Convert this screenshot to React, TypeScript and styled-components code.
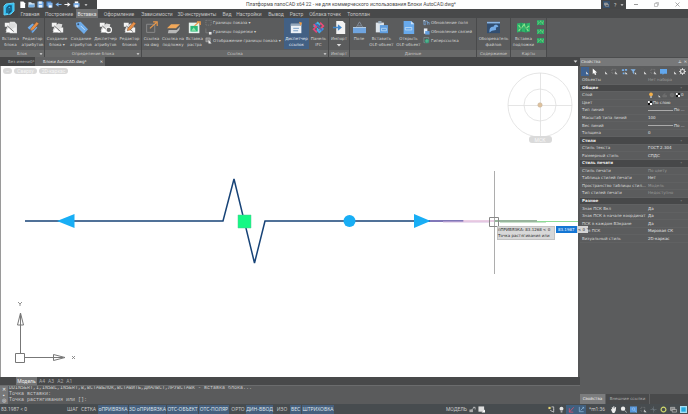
import React from "react";
import styled, { createGlobalStyle, css } from "styled-components";

const Global = createGlobalStyle`
  * { box-sizing: border-box; }
  html, body, #root { height: 100%; margin: 0; }
  body { background: #555657; overflow: hidden; }
  body, button, input { font-family: Roboto, "Noto Sans", sans-serif; font-size: 5px; line-height: 6px; }
  button, input { border: 0; padding: 0; margin: 0; color: inherit; background: none; border-radius: 0; }
  svg { display: block; flex: none; }
`;

const compact = css`
  &, button, input { font-family: "DejaVu Sans", sans-serif; font-size: 4px; }
`;

/* ---------- icons ---------- */

type IconName =
  | "new" | "open" | "save" | "saveAll" | "undo" | "redo" | "print" | "caret"
  | "insertBlock" | "editAttr" | "createBlock" | "tag" | "manager" | "editBlock"
  | "linkDwg" | "linkUnder" | "raster" | "frame" | "clip" | "eyeFrame" | "dispatcher" | "ifc"
  | "import" | "field" | "pasteOle" | "openOle" | "updField" | "updLink" | "hyper"
  | "explorer" | "map" | "cursor" | "pick" | "rect" | "dots" | "filter" | "chat" | "gear"
  | "bulb" | "lamp" | "hand" | "magnifier" | "zoomWin" | "orbit" | "ring" | "windows" | "screen"
  | "axes" | "pen" | "lock" | "sheet" | "wave" | "layers" | "globe" | "swatch";

const blocks = (
  <>
    <path d="M1 2h6v5H1zM9 8h6v6H9z" fill="#f2f2f2" />
    <path d="M4 7l5-4 5 1-1 4-7 5-4-1z" fill="#dcdcdc" />
    <path d="M2 14l4-6 5 6z" fill="#fff" />
    <path d="M4 6l8 7" stroke="#666" strokeWidth="1" />
  </>
);
const pencil = <path d="M6 9L13 1l3 2-7 8-4 1z" fill="#e88f46" stroke="#543b2d" strokeWidth=".5" />;
const mapBody = (
  <>
    <path d="M0 3l5-1 6 1 5-1v11l-5 1-6-1-5 1z" fill="#2fb56b" />
    <path d="M2 5l3 4 4-5 2 5 4-3M5 9l-3 3M11 9l3 3" stroke="#8fe38c" strokeWidth="1.4" fill="none" />
    <path d="M5 2v11M11 3v11" stroke="#16734b" strokeWidth=".8" />
  </>
);

const art: Record<IconName, React.ReactNode> = {
  new: <path d="M3 1h7l4 4v11H3z" fill="#fff" />,
  open: <><path d="M1 3h6l2 2h6v9H1z" fill="#d8e9f6" /><path d="M3 8h13l-3 6H1z" fill="#76aee0" /></>,
  save: <><path d="M1 1h12l2 2v12H1z" fill="#74aae5" /><path d="M4 1h7v5H4zM4 9h8v6H4z" fill="#e3f0fb" /></>,
  saveAll: <><path d="M1 1h11v11H1z" fill="#4b87ca" /><path d="M4 4h11v11H4z" fill="#85b6ec" /><path d="M7 10h6v5H7z" fill="#fff" /></>,
  undo: <path d="M15 7H8V3L1 8l7 5V9h7z" fill="#80b5ed" />,
  redo: <path d="M1 7h7V3l7 5-7 5V9H1z" fill="#f3f3f3" />,
  print: <><path d="M4 1h8v5H4z" fill="#fff" /><path d="M1 5h14v8H1z" fill="#79aee8" /><path d="M4 9h8v6H4z" fill="#e6eff8" /></>,
  caret: <path d="M2 5h12l-6 7z" fill="#ddd" />,
  insertBlock: <><path d="M7 1h6l3 3v11H7z" fill="#e2e2e2" />{blocks}</>,
  editAttr: <><path d="M2 8l6-5 6 5-6 7z" fill="#72ace9" /><path d="M4 10l4 4" stroke="#335e92" />{pencil}</>,
  createBlock: blocks,
  tag: <><path d="M1 2l6-1 9 9-5 6-9-9z" fill="#6eabe8" /><circle cx="4" cy="4" r="1.2" fill="#35506d" /><path d="M7 6l5 5" stroke="#d3e6fa" /></>,
  manager: <>{blocks}<circle cx="12" cy="11" r="3.4" fill="#666" stroke="#f2f2f2" strokeWidth="1.5" /></>,
  editBlock: <>{blocks}{pencil}</>,
  linkDwg: <><path d="M2 4h10v10H2z" fill="none" stroke="#929292" /><path d="M6 9l8-7M10 1h5v5" fill="none" stroke="#ed9a49" strokeWidth="1.4" /></>,
  linkUnder: <><path d="M5 4h11l-5 5H0z" fill="#f1a85a" /><path d="M2 11h10l4-4-1 4-4 4H1z" fill="#b8b8b8" /></>,
  raster: <><path d="M1 2h13v13H1z" fill="#e7f3ef" /><path d="M3 6h9v7H3z" fill="#2db878" /><path d="M4 12l3-4 3 4" fill="#8be7a8" /><path d="M8 6l6-5M11 1h4v4" stroke="#ed9a49" strokeWidth="1.6" fill="none" /></>,
  frame: <path d="M2 3h12v11H2z" fill="none" stroke="#a9a9a9" strokeDasharray="2 2" />,
  clip: <><path d="M2 1v10h9" fill="none" stroke="#9a9a9a" /><path d="M9 9h6v6H9z" fill="#e8e8e8" /></>,
  eyeFrame: <><path d="M2 2h10v9H2z" fill="#888" stroke="#ccc" /><path d="M8 7l7 8H8z" fill="#f4f4f4" /></>,
  dispatcher: <><path d="M1 4h13v11H1z" fill="#edf2f7" /><path d="M1 3h13v3H1z" fill="#95a8bc" /><path d="M4 9h7M4 12h6" stroke="#608ebb" /><path d="M11 1l4 1-2 4z" fill="#ef9d48" /></>,
  ifc: (
    <g fill="none" strokeWidth="2">
      <path d="M2 7l5-5 3 3M6 9l3 3" stroke="#43b6e5" />
      <path d="M10 2l4 4-5 5M2 4l4 4" stroke="#ed4a79" />
      <path d="M14 9l-5 5-3-3" stroke="#43a3e5" />
      <path d="M6 14l-4-4 5-5" stroke="#e0457c" />
      <path d="M4 3l9 9" stroke="#3f6fc0" />
    </g>
  ),
  import: <><path d="M4 0h8l3 3v13H4z" fill="#f3f3f3" /><path d="M0 7h6V4l5 4-5 4V9H0z" fill="#4187cc" /></>,
  field: <><path d="M0 8h16v7H0z" fill="#6fa4df" /><path d="M4 8l4-7 4 7M6 6h4" stroke="#8c99a8" fill="none" /><path d="M0 8h16" stroke="#c4dcf3" /></>,
  pasteOle: <><path d="M1 2h10v12H1z" fill="#dce4eb" /><path d="M4 0h4v3H4z" fill="#96a9ba" /><path d="M6 5h10v10H6z" fill="#609edf" /><path d="M8 9h6v3H8z" fill="none" stroke="#b8d7f5" /></>,
  openOle: <><path d="M2 0h9l4 3v13H2z" fill="#68a9eb" /><path d="M4 8h8v3H4z" fill="none" stroke="#c1dcf5" /><path d="M11 0v4h4z" fill="#cbe1f6" /></>,
  updField: <><path d="M2 3v10h4M5 13V5h5v8M10 8h4v5" stroke="#7cacdf" strokeWidth="1.6" fill="none" /><path d="M1 2l4 1-3 3z" fill="#e6e6e6" /></>,
  updLink: <><path d="M2 1h8v12H2z" fill="#e6eef7" /><path d="M5 7h10v8H5z" fill="#639fdf" /></>,
  hyper: <><path d="M2 1h11v12H2z" fill="none" stroke="#8ebbb9" /><circle cx="9" cy="9" r="5" fill="#25926d" /><path d="M4 9h10M9 4v10" stroke="#9ce0c1" /></>,
  explorer: <><path d="M0 1h16v14H0z" fill="#324e70" /><path d="M0 1h16v2H0z" fill="#8bb5e3" /><path d="M3 14c0-5 1-7 5-7 1-3 5-3 6 0l-3 1v3l-5 1z" fill="#75ace7" /></>,
  map: mapBody,
  cursor: <path d="M4 1v13l3-3 2 5 3-1-2-5h4z" fill="#fff" />,
  pick: <><path d="M2 2h8v8" fill="none" stroke="#666" /><path d="M9 8l6 6h-5z" fill="#e7e7e7" /></>,
  rect: <><path d="M2 3h9v9H2z" fill="none" stroke="#aaa" strokeDasharray="2 2" /><path d="M9 8l6 6h-5z" fill="#ddd" /></>,
  dots: <><path d="M2 3h5v4H2zM9 2h5v4H9zM4 10h4v4H4z" fill="#77aee8" /><path d="M10 9l5 5h-5z" fill="#eee" /></>,
  filter: <><path d="M1 3h12L9 8v6L6 11V8z" fill="#83b5e9" /><path d="M11 9l4 5h-4z" fill="#eee" /></>,
  chat: <path d="M0 2h16v11H9l-3 3v-3H0z" fill="#62a7ed" />,
  gear: <><circle cx="8" cy="8" r="4.500" fill="none" stroke="#ddd" strokeWidth="2.500" /><path d="M8 0v3M8 13v3M0 8h3M13 8h3M2 2l2 2M12 12l2 2M14 2l-2 2M4 12l-2 2" stroke="#ddd" strokeWidth="2" /></>,
  bulb: <><circle cx="8" cy="6" r="5" fill="#f3b04b" /><path d="M6 11h4v4H6z" fill="#ddd" /></>,
  lamp: <><circle cx="8" cy="6" r="4.500" fill="#e4e4e4" /><path d="M6 11h4v4H6z" fill="#a9a9a9" /></>,
  hand: <path d="M2 8l2-1 1 2-1-6 2-1 1 5 1-7 2 1v6l2-5 2 1-1 8-3 5H6z" fill="#eee" />,
  magnifier: <><circle cx="7" cy="6" r="5" fill="#ececec" /><path d="M11 10l4 5" stroke="#bbb" strokeWidth="2" /></>,
  zoomWin: <><path d="M0 1h16v14H0z" fill="#5a98db" /><circle cx="8" cy="7" r="3" fill="none" stroke="#b4d6f8" /><path d="M10 9l5 6" stroke="#b4d6f8" /></>,
  orbit: <><path d="M8 1v14M1 8h14" stroke="#7b8790" /><path d="M4 4l8 8" stroke="#77818b" /></>,
  ring: <circle cx="8" cy="8" r="5.500" fill="none" stroke="#d5dc6e" strokeWidth="2.600" />,
  windows: <><path d="M1 3h10v7H1z" fill="#888" stroke="#ddd" /><path d="M5 8h10v6H5z" fill="#555" stroke="#eee" /></>,
  screen: <><path d="M0 0h16v16H0z" fill="#a6dff5" /><path d="M3 3h10v10H3z" fill="#27a9dc" /></>,
  axes: <path d="M3 2v11h10M6 10l7-7M10 3h3v3" fill="none" stroke="#9cc8ee" strokeWidth="1.400" />,
  pen: <path d="M3 14L13 3M3 5v9h9" fill="none" stroke="#e0506e" strokeWidth="1.800" />,
  lock: <><path d="M1 8h8v6H1z" fill="#aaa" /><path d="M6 9L13 2M9 3h5v5" fill="none" stroke="#ddd" strokeWidth="1.400" /></>,
  sheet: <><path d="M1 1h13v12H1z" fill="#ddd" /><path d="M8 15h8V8z" fill="#fff" /></>,
  wave: <><path d="M1 2h5v5H1z" fill="#e7d673" /><path d="M8 2h5v6M5 10l8 4V7" fill="none" stroke="#eee" strokeWidth="1.500" /></>,
  layers: <path d="M2 9h10v4H2zM5 8V5h5" fill="#686868" stroke="#838383" />,
  globe: <><circle cx="8" cy="8" r="5" fill="#646464" stroke="#8a8a8a" /><path d="M3 8h10M8 3v10" stroke="#888" /></>,
  swatch: <><path d="M0 0h16v16H0z" fill="#111" /><path d="M0 0h7v8h9v8H8V8H0z" fill="#fff" /></>,
};

const Icon = ({ name, size = 7 }: { name: IconName; size?: number }) => (
  <svg width={size} height={size} viewBox="0 0 16 16" aria-hidden="true">{art[name]}</svg>
);

/* ---------- header ---------- */

const Shell = styled.div`display: flex; flex-direction: column; height: 100vh; color: #c4c4c4;`;
const Header = styled.header`display: flex; height: 18px; background: #48494a; flex: none;`;
const Logo = styled.div`width: 18px; display: grid; place-items: center; background: #464748;`;
const HeaderBody = styled.div`flex: 1; min-width: 0;`;
const TitleBar = styled.div`display: flex; height: 9px; background: #fefefe;`;
const Quick = styled.div`
  display: flex; align-items: center; gap: 2px; width: 79px; padding-left: 1px; background: #464748;
  button { display: grid; place-items: center; width: 7px; height: 7px; }
`;
const Title = styled.h1`
  margin: 0 0 0 149px; flex: 1; color: #4a4a4a; font-size: 5px; line-height: 9px; font-weight: 400; white-space: nowrap;
`;
const Help = styled.div`display: flex; align-items: center; gap: 4px; width: 25px; padding-left: 2px; background: #464748; color: #ddd;`;
const Blue = styled.span`display: grid; place-items: center; width: 7px; height: 7px; background: #37516d;`;
const WinButtons = styled.div`
  display: flex; width: 62px; justify-content: space-around; align-items: center;
  button { display: grid; place-items: center; width: 9px; height: 9px; }
`;
const Menu = styled.nav`display: flex; height: 9px;`;
const MenuTab = styled.button<{ $w: number; $on?: boolean }>`
  width: ${p => p.$w}px; height: 9px; line-height: 10px; white-space: nowrap; text-align: center;
  ${p => p.$on && css`background: #707172; color: #e2e2e2;`}
`;

const menu: [string, number][] = [
  ["Главная", 24], ["Построение", 34], ["Вставка", 22], ["Оформление", 42], ["Зависимости", 34],
  ["3D-инструменты", 46], ["Вид", 14], ["Настройки", 30], ["Вывод", 24], ["Растр", 17], ["Облака точек", 40], ["Топоплан", 27],
];

/* ---------- ribbon ---------- */

const Ribbon = styled.div`display: flex; height: 39px; flex: none; background: #5b5c5d; color: #d4d4d4; ${compact}`;
const Group = styled.section<{ $w: number }>`
  display: flex; flex-direction: column; width: ${p => p.$w}px; flex: none; border-right: 1px solid #494a4b;
`;
const GroupBody = styled.div`display: flex; flex: 1;`;
const GroupLabel = styled.div`
  position: relative; height: 7px; line-height: 7px; text-align: center; background: #686969; color: #c8c8c8;
  svg { position: absolute; right: 1px; top: 2px; }
`;
const Tool = styled.button<{ $w: number; $on?: boolean }>`
  display: flex; flex-direction: column; align-items: center; gap: 2px; width: ${p => p.$w}px; height: 31px; padding-top: 3px;
  line-height: 6px; white-space: nowrap;
  ${p => p.$on && css`background: #426084; color: #e6eef6;`}
`;
const ToolText = styled.span`display: flex; flex-direction: column; align-items: center;`;
const List = styled.div<{ $w: number }>`
  display: flex; flex-direction: column; width: ${p => p.$w}px; padding: 0 0 0 1px;
  button { display: flex; align-items: center; gap: 1px; height: 9px; white-space: nowrap; }
`;

const Big = ({ w, icon, text, on }: { w: number; icon: IconName; text: string[]; on?: boolean }) => (
  <Tool $w={w} $on={on}>
    <Icon name={icon} size={13} />
    <ToolText>{text.map(t => t === "▾" ? <Icon key={t} name="caret" size={6} /> : <span key={t}>{t}</span>)}</ToolText>
  </Tool>
);
const Section = ({ w, label, more, children }: { w: number; label: string; more?: boolean; children: React.ReactNode }) => (
  <Group $w={w}>
    <GroupBody>{children}</GroupBody>
    <GroupLabel>{label}{more && <Icon name="caret" size={4} />}</GroupLabel>
  </Group>
);

/* ---------- workspace ---------- */

const Work = styled.main`display: flex; flex: 1; min-height: 0;`;
const Left = styled.div`display: flex; flex-direction: column; flex: 1; min-width: 0;`;
const DocTabs = styled.div`display: flex; align-items: center; height: 9px; flex: none; background: #454647; color: #b4b4b4; padding-left: 8px; ${compact}`;
const DocTab = styled.button<{ $w: number; $on?: boolean }>`
  display: flex; align-items: center; justify-content: space-between; width: ${p => p.$w}px; height: 9px; white-space: nowrap;
  ${p => p.$on && css`background: #626364; color: #ececec; padding: 0 2px 0 8px;`}
`;
const Push = styled.span`margin-left: auto; padding-right: 2px;`;
const Canvas = styled.div`position: relative; flex: 1; min-height: 0; margin-right: 2px; background: #fff; border-left: 1px solid #9a9a9a;`;
const Drawing = styled.svg`position: absolute; left: -1px; top: 0;`;
const Ucs = styled.svg`position: absolute; left: 9px; bottom: 12px;`;
const ViewPills = styled.div`
  position: absolute; left: 2px; top: 2px; display: flex; gap: 2px;
  button { height: 6px; padding: 0 3px; border-radius: 3px; background: #d9d9d9; color: #f7f7f7; }
`;
const Compass = styled.div`
  position: absolute; right: 5px; top: 6px; display: flex; flex-direction: column; align-items: center;
  button { height: 7px; width: 23px; border-radius: 3px; background: #dadada; color: #f8f8f8; margin-top: -2px; }
`;
const Dynamic = styled.div`
  position: absolute; left: 496px; top: 160px; z-index: 2; display: flex; align-items: flex-start; gap: 1px; color: #2c2c2c; white-space: nowrap; ${compact}
`;
const Tip = styled.div`background: #d8d8d8; border: 1px solid #c2c2c2; width: 58px; line-height: 6px;`;
const DynInput = styled.input`width: 21px; height: 7px; background: #1476d4; color: #f2f8ff; padding-left: 2px;`;
const Angle = styled.span`margin-left: -1px; width: 11px; height: 7px; line-height: 7px; background: #d5d5d5; padding-left: 1px;`;

const ModelTabs = styled.div`
  display: flex; align-items: center; height: 8px; flex: none; gap: 3px; background: #48494a; padding-left: 16px; color: #aaa;
  button { height: 8px; line-height: 8px; }
  button:first-child { width: 21px; background: #737475; color: #eee; margin-right: -1px; }
`;
const Command = styled.div`display: flex; height: 19px; flex: none; background: #5a5b5c; border-top: 1px solid #6b6c6d; overflow: hidden;`;
const Grip = styled.div`display: flex; flex-direction: column; align-items: center; justify-content: space-between; width: 8px; padding: 1px 0; background: #777879; color: #eee; line-height: 5px;`;
const Log = styled.pre`margin: -1px 0 0 1px; font: 5px/6px "Liberation Mono", monospace; color: #c8c8c8;`;

/* ---------- properties ---------- */

const Panel = styled.aside`display: flex; flex-direction: column; width: 108px; flex: none; background: #5b5c5d; border-top: 1px solid #4c4d4e; ${compact}`;
const PanelHead = styled.div`display: flex; align-items: center; gap: 2px; height: 8px; padding: 0 1px; background: #777879; color: #e0e0e0; span { flex: 1; }`;
const PanelTools = styled.div`
  display: flex; align-items: center; justify-content: space-between; height: 11px; padding: 0 1px;
  button { display: grid; place-items: center; width: 8px; height: 9px; }
  button:first-child { background: #3e6292; }
`;
const Props = styled.table`
  width: 100%; height: 166px; table-layout: fixed; border-collapse: collapse; font-size: 4px; line-height: 6px; color: #dadada;
  th, td { padding: 0; text-align: left; font-weight: 400; white-space: nowrap; border-bottom: 1px solid #606162; }
  th { padding-left: 2px; }
`;
const PropRow = styled.tr<{ $head?: boolean; $dim?: boolean }>`
  td { color: ${p => p.$dim ? "#9a9a9a" : "#e2e2e2"}; }
  ${p => p.$head && css`background: #474849; th { font-weight: 700; color: #ededed; } td { text-align: right; padding-right: 6px; }`}
`;
const Value = styled.span`display: flex; align-items: center; gap: 1px;`;
const Rule = styled.i`width: 25px; height: 1px; background: #aaa;`;
const PanelTabs = styled.div`
  display: flex; margin-top: auto; height: 10px; background: #494a4b; color: #b0b0b0;
  button { padding: 0 2px; border-right: 1px solid #606162; white-space: nowrap; }
  button:first-child { width: 26px; background: #7b7c7d; color: #eee; }
  button:last-child { width: 44px; }
`;

type Row = { k: string; v?: React.ReactNode; head?: boolean; dim?: boolean };
const line = <Value><Rule />По ...</Value>;
const rows: Row[] = [
  { k: "Объекты", v: "Нет набора", dim: true },
  { k: "Общие", head: true },
  { k: "Слой", v: <Value><Icon name="bulb" size={6} /><Icon name="pick" size={6} /><Icon name="layers" size={6} /><Icon name="globe" size={6} /><Icon name="swatch" size={4} />0</Value> },
  { k: "Цвет", v: <Value><Icon name="swatch" size={4} />По слою</Value> },
  { k: "Тип линий", v: line },
  { k: "Масштаб типа линий", v: "100" },
  { k: "Вес линий", v: line },
  { k: "Толщина", v: "0" },
  { k: "Стили", head: true },
  { k: "Стиль текста", v: "ГОСТ 2.304" },
  { k: "Размерный стиль", v: "СПДС" },
  { k: "Стиль печати", head: true },
  { k: "Стиль печати", v: "По цвету", dim: true },
  { k: "Таблица стилей печати", v: "Нет" },
  { k: "Пространство таблицы стил...", v: "Модель", dim: true },
  { k: "Тип стилей печати", v: "Недоступно", dim: true },
  { k: "Разное", head: true },
  { k: "Знак ПСК Вкл", v: "Да" },
  { k: "Знак ПСК в начале координат", v: "Да" },
  { k: "ПСК в каждом ВЭкране", v: "Да" },
  { k: "Имя ПСК", v: "Мировая СК" },
  { k: "Визуальный стиль", v: "2D-каркас" },
];

/* ---------- status bar ---------- */

const Status = styled.footer`display: flex; align-items: center; height: 10px; flex: none; background: #474c4f; color: #c9c9c9; white-space: nowrap;`;
const Coords = styled.span`width: 66px; padding-left: 1px;`;
const Toggle = styled.button<{ $w: number; $on?: boolean }>`
  width: ${p => p.$w}px; height: 9px; line-height: 9px; text-align: center; font-family: "Noto Sans", sans-serif; white-space: nowrap;
  ${p => p.$on && css`background: #455f7d; color: #dde4eb; border-right: 1px solid #474c4f;`}
`;
const ModelMode = styled.div`display: flex; align-items: center; gap: 2px; margin-left: 111px;`;
const StatusIcons = styled.div`
  display: flex; align-items: center; margin-left: auto;
  button { display: grid; place-items: center; width: 10px; height: 9px; }
  span { width: 22px; padding-left: 3px; }
`;
const Selected = styled.button`background: #41607f;`;

const toggles: [string, number, boolean][] = [
  ["ШАГ", 13, false], ["СЕТКА", 19, false], ["оПРИВЯЗКА", 31, true], ["3D оПРИВЯЗКА", 38, true], ["ОТС-ОБЪЕКТ", 32, true],
  ["ОТС-ПОЛЯР", 31, true], ["ОРТО", 16, false], ["ДИН-ВВОД", 28, true], ["ИЗО", 16, false], ["ВЕС", 12, true], ["ШТРИХОВКА", 33, true],
];

export default function App() {
  return (
    <Shell>
      <Global />
      <Header>
        <Logo>
          <svg width="14" height="14" viewBox="0 0 14 14" aria-label="nanoCAD">
            <path d="M4 2l8-1v8l-3 3-7 1V4z" fill="#2fb9ec" stroke="#62d1f5" />
            <path d="M5 11V6l2-2h2v5l-2 2V6" fill="none" stroke="#145177" strokeWidth="1.500" />
          </svg>
        </Logo>
        <HeaderBody>
          <TitleBar>
            <Quick>
              {(["new", "open", "save", "saveAll", "undo", "redo", "print", "caret"] as IconName[]).map(n => (
                <button key={n} aria-label={n}><Icon name={n} size={n === "caret" ? 4 : 7} /></button>
              ))}
            </Quick>
            <Title>Платформа nanoCAD x64 22 - не для коммерческого использования Блоки AutoCAD.dwg*</Title>
            <Help><Blue><Icon name="windows" size={5} /></Blue><span>?</span><Icon name="caret" size={4} /></Help>
            <WinButtons>
              <button aria-label="Свернуть"><svg width="5" height="5" viewBox="0 0 5 5"><path d="M0 2.500h4" stroke="#999" /></svg></button>
              <button aria-label="Развернуть"><svg width="5" height="5" viewBox="0 0 5 5"><path d="M.5 1.500h3v3h-3zM1.500 .5h3v3" fill="none" stroke="#aaa" strokeWidth=".7" /></svg></button>
              <button aria-label="Закрыть"><svg width="5" height="5" viewBox="0 0 5 5"><path d="M.5.5l4 4M4.500.5l-4 4" stroke="#888" strokeWidth=".7" /></svg></button>
            </WinButtons>
          </TitleBar>
          <Menu>{menu.map(([t, w]) => <MenuTab key={t} $w={w} $on={t === "Вставка"}>{t}</MenuTab>)}</Menu>
        </HeaderBody>
      </Header>

      <Ribbon>
        <Section w={45} label="Блок" more>
          <Big w={21} icon="insertBlock" text={["Вставка", "блока"]} />
          <Big w={23} icon="editAttr" text={["Редактор", "атрибутов"]} />
        </Section>
        <Section w={97} label="Определение блока" more>
          <Big w={24} icon="createBlock" text={["Создание", "блока ▾"]} />
          <Big w={24} icon="tag" text={["Создание", "атрибутов"]} />
          <Big w={25} icon="manager" text={["Диспетчер", "атрибутов"]} />
          <Big w={23} icon="editBlock" text={["Редактор", "блоков"]} />
        </Section>
        <Section w={187} label="Ссылка" more>
          <Big w={19} icon="linkDwg" text={["Ссылка", "на dwg"]} />
          <Big w={24} icon="linkUnder" text={["Ссылка на", "подложку"]} />
          <Big w={19} icon="raster" text={["Вставка", "растра"]} />
          <List $w={80}>
            <button><Icon name="frame" />Границы показа ▾</button>
            <button><Icon name="clip" />Границы подрезки ▾</button>
            <button><Icon name="eyeFrame" />Отображение границы показа ▾</button>
          </List>
          <Big w={25} icon="dispatcher" text={["Диспетчер", "ссылок"]} on />
          <Big w={19} icon="ifc" text={["Панель", "IFC"]} />
        </Section>
        <Section w={21} label="Импорт"><Big w={20} icon="import" text={["Импорт", "▾"]} /></Section>
        <Section w={127} label="Данные">
          <Big w={18} icon="field" text={["Поле"]} />
          <Big w={27} icon="pasteOle" text={["Вставить", "OLE-объект"]} />
          <Big w={27} icon="openOle" text={["Открыть", "OLE-объект"]} />
          <List $w={54}>
            <button><Icon name="updField" />Обновление поля</button>
            <button><Icon name="updLink" />Обновление связей</button>
            <button><Icon name="hyper" />Гиперссылка</button>
          </List>
        </Section>
        <Section w={34} label="Содержимое"><Big w={33} icon="explorer" text={["Обозреватель", "файлов"]} /></Section>
        <Section w={36} label="Карты">
          <Big w={25} icon="map" text={["Вставка", "подложки"]} />
          <List $w={10}>
            {[1, 2, 3].map(n => <button key={n} aria-label={`Карта ${n}`}><Icon name="map" /></button>)}
          </List>
        </Section>
      </Ribbon>

      <Work>
        <Left>
          <DocTabs>
            <DocTab $w={27}>Без имени0*</DocTab>
            <DocTab $w={70} $on><span>Блоки AutoCAD.dwg*</span><span>✕</span></DocTab>
            <Push><Icon name="caret" size={5} /></Push>
          </DocTabs>
          <Canvas>
            <Drawing width="578" height="240" viewBox="0 66 578 240">
              <path d="M25 221H223L234 179L254.500 263L265 221H430" fill="none" stroke="#174377" strokeWidth="1.500" />
              <path d="M428 221H464" stroke="#574aa0" strokeWidth="1.500" />
              <path d="M443 222H490" stroke="#d5bbe0" />
              <path d="M463 221H494" stroke="#e5bfdc" strokeWidth="1.500" />
              <path d="M494 221H537" stroke="#769d7c" strokeWidth="1.500" />
              <path d="M500 222.500H546" stroke="#cbe1cd" />
              <path d="M537 221.500H578" stroke="#8ddc95" />
              <path d="M57 221L74.500 214V228ZM430.500 221L414 214V228Z" fill="#18aef5" />
              <circle cx="349.500" cy="221" r="6" fill="#18aef5" />
              <path d="M238 215h13v13h-13z" fill="#16f884" stroke="#50c895" strokeWidth=".5" />
              <path d="M494.500 171V274" stroke="#adadad" />
              <path d="M489.500 217.500h9v9h-9z" fill="none" stroke="#888" />
            </Drawing>
            <ViewPills><button>–</button><button>Сверху</button><button>2D-каркас</button></ViewPills>
            <Compass>
              <svg width="66" height="66" viewBox="0 0 66 66" fill="none" stroke="#dedede" strokeWidth=".8">
                <circle cx="33" cy="33" r="32" /><circle cx="33" cy="33" r="16" />
                <path d="M1 33.500H65M33.500 1V65" />
                <circle cx="33" cy="33" r="2.200" fill="#dfc29d" stroke="#c9b59c" strokeWidth=".6" />
              </svg>
              <button>МСК</button>
            </Compass>
            <Ucs width="70" height="66" viewBox="10 299 70 66" fill="none" stroke="#777">
              <path d="M15.500 353.500h9v9h-9zM20.500 353V314M17.500 325L20.500 313l3 12zM24 357.500H63M53.500 354.500L65 357.500l-11.500 3z" />
              <path d="M18 302l2 2 2-2M20 304v2M72 356l3 3M75 356l-3 3" strokeWidth=".8" />
            </Ucs>
            <Dynamic>
              <Tip>пПРИВЯЗКА: 83.1268 &lt; 0<br />Точка растягивания или</Tip>
              <DynInput aria-label="Расстояние" defaultValue="83.1987" />
              <Angle>&lt; 0 °</Angle>
            </Dynamic>
          </Canvas>
          <ModelTabs><button>Модель</button><button>A4</button><button>A3</button><button>A2</button><button>A1</button></ModelTabs>
          <Command>
            <Grip><span>✕</span><span>▪</span><span>◎</span></Grip>
            <Log>{"DDINSERT,I,INSBL,INSERT,В,ВСТАВБЛОК,ВСТАВИТЬ,ДИАЛВСТ,ЛРУВСТАВК - вставка блока...\nТочка вставки:\nТочка растягивания или []:"}</Log>
          </Command>
        </Left>
        <Panel>
          <PanelHead><span>Свойства</span><b>⊥</b><b>✕</b></PanelHead>
          <PanelTools>
            {(["pick", "cursor", "pick", "rect", "dots", "filter", "pick", "rect", "chat", "pick", "gear"] as IconName[]).map((n, i) => (
              <button key={i} aria-label={n}><Icon name={n} /></button>
            ))}
          </PanelTools>
          <Props>
            <colgroup><col width="68" /><col /></colgroup>
            <tbody>
              {rows.map((r, i) => (
                <PropRow key={i} $head={r.head} $dim={r.dim}><th scope="row">{r.k}</th><td>{r.head ? "-" : r.v}</td></PropRow>
              ))}
            </tbody>
          </Props>
          <PanelTabs><button>Свойства</button><button>Внешние ссылки</button></PanelTabs>
        </Panel>
      </Work>

      <Status>
        <Coords>83.1987 &lt; 0</Coords>
        {toggles.map(([t, w, on]) => <Toggle key={t} $w={w} $on={on} aria-pressed={on}>{t}</Toggle>)}
        <ModelMode>МОДЕЛЬ<Icon name="lock" /><Icon name="sheet" /></ModelMode>
        <StatusIcons>
          <button aria-label="Сетка"><Icon name="wave" /></button>
          <button aria-label="Подсветка"><Icon name="lamp" /></button>
          <Selected aria-label="Перо"><Icon name="pen" /></Selected>
          <Selected aria-label="Оси"><Icon name="axes" /></Selected>
          <span>*m1:36</span>
          {(["hand", "magnifier", "zoomWin", "rect", "orbit", "ring", "windows", "screen"] as IconName[]).map(n => (
            <button key={n} aria-label={n}><Icon name={n} /></button>
          ))}
        </StatusIcons>
      </Status>
    </Shell>
  );
}
